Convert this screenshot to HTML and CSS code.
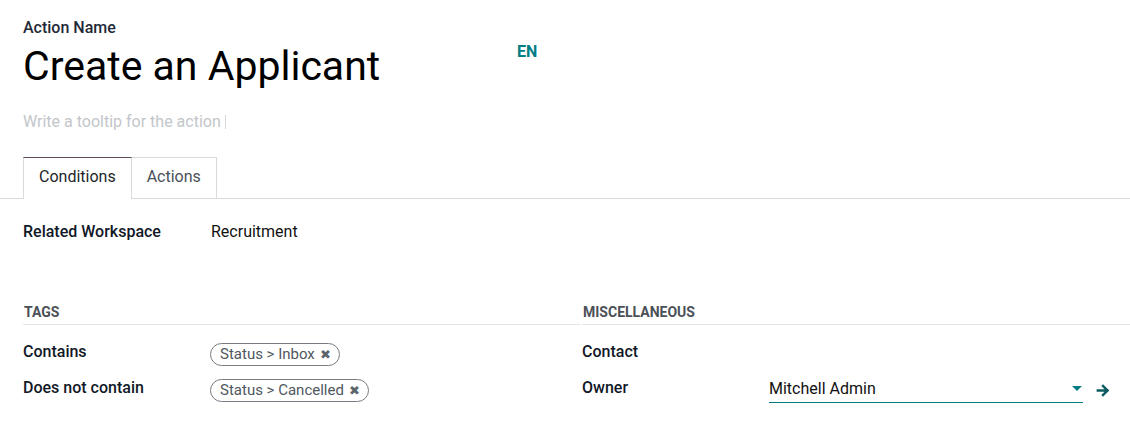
FILE: index.html
```html
<!DOCTYPE html>
<html>
<head>
<meta charset="utf-8">
<link rel="stylesheet" href="styles.css">
</head>
<body>
<div class="sheet">
  <div class="title-area">
    <div class="title-left">
      <div class="field-label">Action Name</div>
      <h1 class="title">Create an Applicant</h1>
    </div>
    <div class="lang">EN</div>
  </div>
  <div class="tooltip-input">Write a tooltip for the action <span class="caret-bar"></span></div>
  <div class="tabs">
    <div class="tab active">Conditions</div>
    <div class="tab">Actions</div>
  </div>
  <div class="tab-body">
    <div class="row related">
      <div class="lbl lbl-wide">Related Workspace</div>
      <div class="val">Recruitment</div>
    </div>
    <div class="groups">
      <div class="group group-left">
        <div class="group-title">TAGS</div>
        <div class="row">
          <div class="lbl lbl-tags">Contains</div>
          <div class="val"><span class="tag">Status &gt; Inbox <span class="x">✖</span></span></div>
        </div>
        <div class="row">
          <div class="lbl lbl-tags">Does not contain</div>
          <div class="val"><span class="tag">Status &gt; Cancelled <span class="x">✖</span></span></div>
        </div>
      </div>
      <div class="group group-right">
        <div class="group-title">MISCELLANEOUS</div>
        <div class="row">
          <div class="lbl lbl-misc">Contact</div>
          <div class="val"></div>
        </div>
        <div class="row">
          <div class="lbl lbl-misc">Owner</div>
          <div class="val owner">
            <div class="many2one">
              <span class="m2o-text">Mitchell Admin</span>
              <svg class="dd" width="10" height="6" viewBox="0 0 10 6"><path d="M0 0h10L5 5z" fill="#017e84"/></svg>
            </div>
            <svg class="arrow" width="14" height="13" viewBox="0 0 14 13"><path d="M7 0.3L5.3 2l3.2 3.2H0.6v2.6h7.9L5.3 11l1.7 1.7 6.3-6.2z" fill="#0c5c61"/></svg>
          </div>
        </div>
      </div>
    </div>
  </div>
</div>
</body>
</html>
```

FILE: styles.css
```css
html, body {
  margin: 0;
  padding: 0;
  background: #fff;
}
body {
  font-family: Roboto, "Liberation Sans", sans-serif;
  color: #212529;
  font-size: 16px;
}
.sheet {
  padding-top: 17px;
}
.title-area {
  display: flex;
  padding-left: 23px;
}
.title-left {
  width: 494px;
}
.field-label {
  font-weight: 500;
  font-size: 16px;
  line-height: 22px;
  color: #1f2937;
}
.title {
  margin: 0;
  font-weight: 400;
  font-size: 41px;
  line-height: 54px;
  color: #000;
}
.lang {
  font-weight: 700;
  color: #017e84;
  font-size: 16px;
  padding-top: 25px;
}
.tooltip-input {
  margin-top: 18px;
  padding-left: 23px;
  font-size: 16px;
  line-height: 22px;
  color: #c3c6ca;
}
.caret-bar {
  display: inline-block;
  width: 1px;
  height: 14px;
  background: #d7d9dc;
  vertical-align: -2px;
}
.tabs {
  margin-top: 24px;
  display: flex;
  padding-left: 23px;
  border-bottom: 1px solid #d8dadd;
}
.tab {
  height: 41px;
  box-sizing: border-box;
  padding: 0 15px;
  line-height: 38px;
  font-size: 16px;
  color: #4a5058;
  border: 1px solid #d8dadd;
  border-bottom: none;
  margin-bottom: -1px;
  background: #fff;
}
.tab.active {
  color: #212529;
  border-top-color: #5f4a5c;
  height: 42px;
}
.tab + .tab {
  border-left: none;
}
.tab-body {
  padding-top: 20px;
}
.row {
  display: flex;
  align-items: center;
  min-height: 24px;
}
.related {
  padding-left: 23px;
  height: 24px;
}
.lbl {
  font-weight: 500;
  font-size: 16px;
  color: #111827;
}
.lbl-wide {
  width: 188px;
}
.val {
  font-size: 16px;
  color: #111;
}
.groups {
  display: flex;
  margin-top: 59px;
}
.group-left {
  width: 557px;
  margin-left: 23px;
}
.group-right {
  flex: 1;
  margin-left: 2px;
}
.group-title {
  font-weight: 700;
  font-size: 14px;
  color: #4b5057;
  line-height: 20px;
  padding-left: 1px;
  padding-bottom: 2px;
  border-bottom: 1px solid #e3e5e8;
  margin-bottom: 17px;
}
.group .row {
  height: 36px;
  align-items: flex-start;
}
.lbl-tags {
  width: 187px;
}
.lbl-misc {
  width: 187px;
}
.tag {
  display: inline-block;
  border: 1px solid #777c82;
  border-radius: 12px;
  padding: 0 8px 0 9px;
  font-size: 15px;
  line-height: 21px;
  color: #505760;
  margin-top: 1px;
}
.x {
  font-size: 13px;
  color: #5c636a;
  margin-left: 1px;
}
.owner {
  display: flex;
  align-items: center;
}
.many2one {
  width: 314px;
  border-bottom: 1px solid #017e84;
  display: flex;
  align-items: center;
  justify-content: space-between;
  height: 27px;
  margin-top: -3px;
}
.m2o-text {
  font-size: 16px;
  color: #111;
}
.dd {
  margin-right: 1px;
}
.arrow {
  margin-left: 13px;
}
```
